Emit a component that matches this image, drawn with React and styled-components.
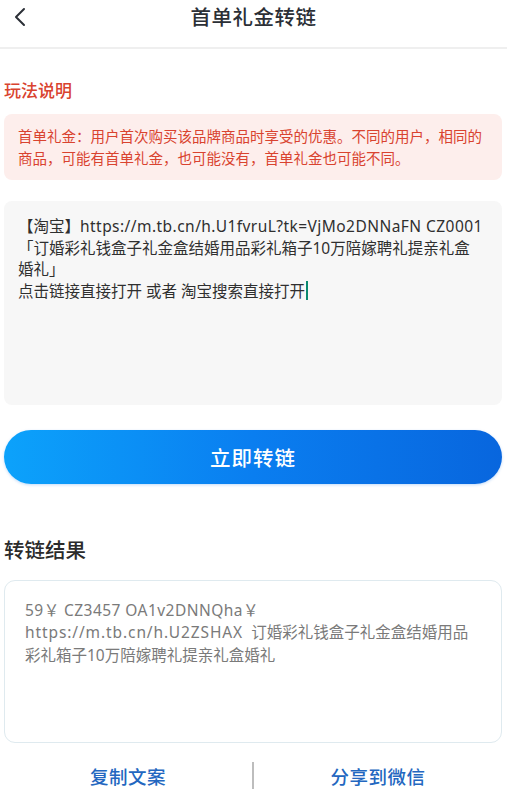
import React from "react";
import styled, { createGlobalStyle } from "styled-components";

const GlobalStyle = createGlobalStyle`
  html, body {
    margin: 0;
    padding: 0;
    background: #ffffff;
  }
  * {
    box-sizing: border-box;
  }
  body {
    font-family: "Noto Sans", "Noto Sans CJK SC", sans-serif;
  }
`;

const Page = styled.div`
  width: 507px;
  min-height: 797px;
  background: #fff;
  display: flex;
  flex-direction: column;
`;

const Header = styled.div`
  height: 49px;
  display: flex;
  align-items: center;
  justify-content: center;
  position: relative;
  border-bottom: 2px solid #efefef;
`;

const BackButton = styled.div`
  position: absolute;
  left: 10px;
  top: 6px;
  width: 20px;
  height: 22px;
  display: flex;
  align-items: center;
  justify-content: center;
`;

const Title = styled.h1`
  margin: 0;
  margin-top: -16px;
  font-size: 20.5px;
  font-weight: 500;
  color: #2b2f36;
  letter-spacing: 0.5px;
`;

const Content = styled.div`
  padding: 0 5px 0 4px;
  display: flex;
  flex-direction: column;
`;

const Spacer = styled.div`
  height: ${(p) => p.h}px;
`;

const SectionTitle = styled.h2`
  margin: 0;
  font-size: ${(p) => p.size || 17}px;
  font-weight: 500;
  color: ${(p) => p.color || "#2b2b2b"};
  line-height: 1;
`;

const Notice = styled.div`
  margin-top: 15px;
  background: #fdeeec;
  border-radius: 8px;
  padding: 11px 14px 11px;
  color: #d9432f;
  font-size: 14.5px;
  line-height: 22px;
`;

const InputBox = styled.div`
  margin-top: 21px;
  height: 204px;
  background: #f7f7f7;
  border-radius: 8px;
  padding: 15px 18px 15px 14px;
  color: #2f2f2f;
  font-size: 15.5px;
  line-height: 21.5px;
`;

const Latin = styled.span`
  letter-spacing: ${(p) => p.spacing || 0.45}px;
`;

const Caret = styled.span`
  display: inline-block;
  width: 2px;
  height: 19px;
  background: #0a8a70;
  vertical-align: -3px;
  margin-left: 1px;
`;

const ConvertButton = styled.button`
  margin-top: 25px;
  height: 54px;
  border: none;
  border-radius: 27px;
  background: linear-gradient(90deg, #0ca2fb 0%, #0a7ef0 50%, #0866de 100%);
  color: #fff;
  font-family: inherit;
  font-size: 20.5px;
  font-weight: 500;
  letter-spacing: 1px;
  box-shadow: 0 1px 3px rgba(10, 110, 230, 0.25);
`;

const ResultBox = styled.div`
  margin-top: 19px;
  height: 163px;
  border: 1.5px solid #dfeaef;
  border-radius: 11px;
  padding: 18px 26px 18px 20px;
  color: #7a7a7a;
  font-size: 15.5px;
  line-height: 22.5px;
`;

const Actions = styled.div`
  display: flex;
  align-items: center;
  height: 50px;
  margin-top: 8px;
`;

const ActionButton = styled.div`
  flex: 1;
  text-align: center;
  color: #2367c0;
  font-size: 18.5px;
  font-weight: 500;
  letter-spacing: 0.5px;
`;

const Divider = styled.div`
  width: 2px;
  height: 27px;
  background: #bdbdbd;
`;

export default function App() {
  return (
    <Page>
      <GlobalStyle />
      <Header>
        <BackButton>
          <svg width="14" height="20" viewBox="0 0 14 20" fill="none">
            <path d="M11 2 L3 10 L11 18" stroke="#2b2f36" strokeWidth="2" strokeLinecap="round" strokeLinejoin="round" />
          </svg>
        </BackButton>
        <Title>首单礼金转链</Title>
      </Header>
      <Content>
        <Spacer h={33} />
        <SectionTitle color="#d9432f">玩法说明</SectionTitle>
        <Notice>
          首单礼金：用户首次购买该品牌商品时享受的优惠。不同的用户，相同的商品，可能有首单礼金，也可能没有，首单礼金也可能不同。
        </Notice>
        <InputBox>
          【淘宝】<Latin>https://m.tb.cn/h.U1fvruL?tk=VjMo2DNNaFN CZ0001</Latin>
          <br />
          「订婚彩礼钱盒子礼金盒结婚用品彩礼箱子10万陪嫁聘礼提亲礼盒婚礼」
          <br />
          点击链接直接打开 或者 淘宝搜索直接打开
          <Caret />
        </InputBox>
        <ConvertButton>立即转链</ConvertButton>
        <Spacer h={56} />
        <SectionTitle size={20.5}>转链结果</SectionTitle>
        <ResultBox>
          <Latin>59￥ CZ3457 OA1v2DNNQha￥</Latin>
          <br />
          <Latin spacing={0.9}>https://m.tb.cn/h.U2ZSHAX</Latin>
          {"\u00a0 订婚彩礼钱盒子礼金盒结婚用品彩礼箱子10万陪嫁聘礼提亲礼盒婚礼"}
        </ResultBox>
        <Actions>
          <ActionButton>复制文案</ActionButton>
          <Divider />
          <ActionButton>分享到微信</ActionButton>
        </Actions>
      </Content>
    </Page>
  );
}
